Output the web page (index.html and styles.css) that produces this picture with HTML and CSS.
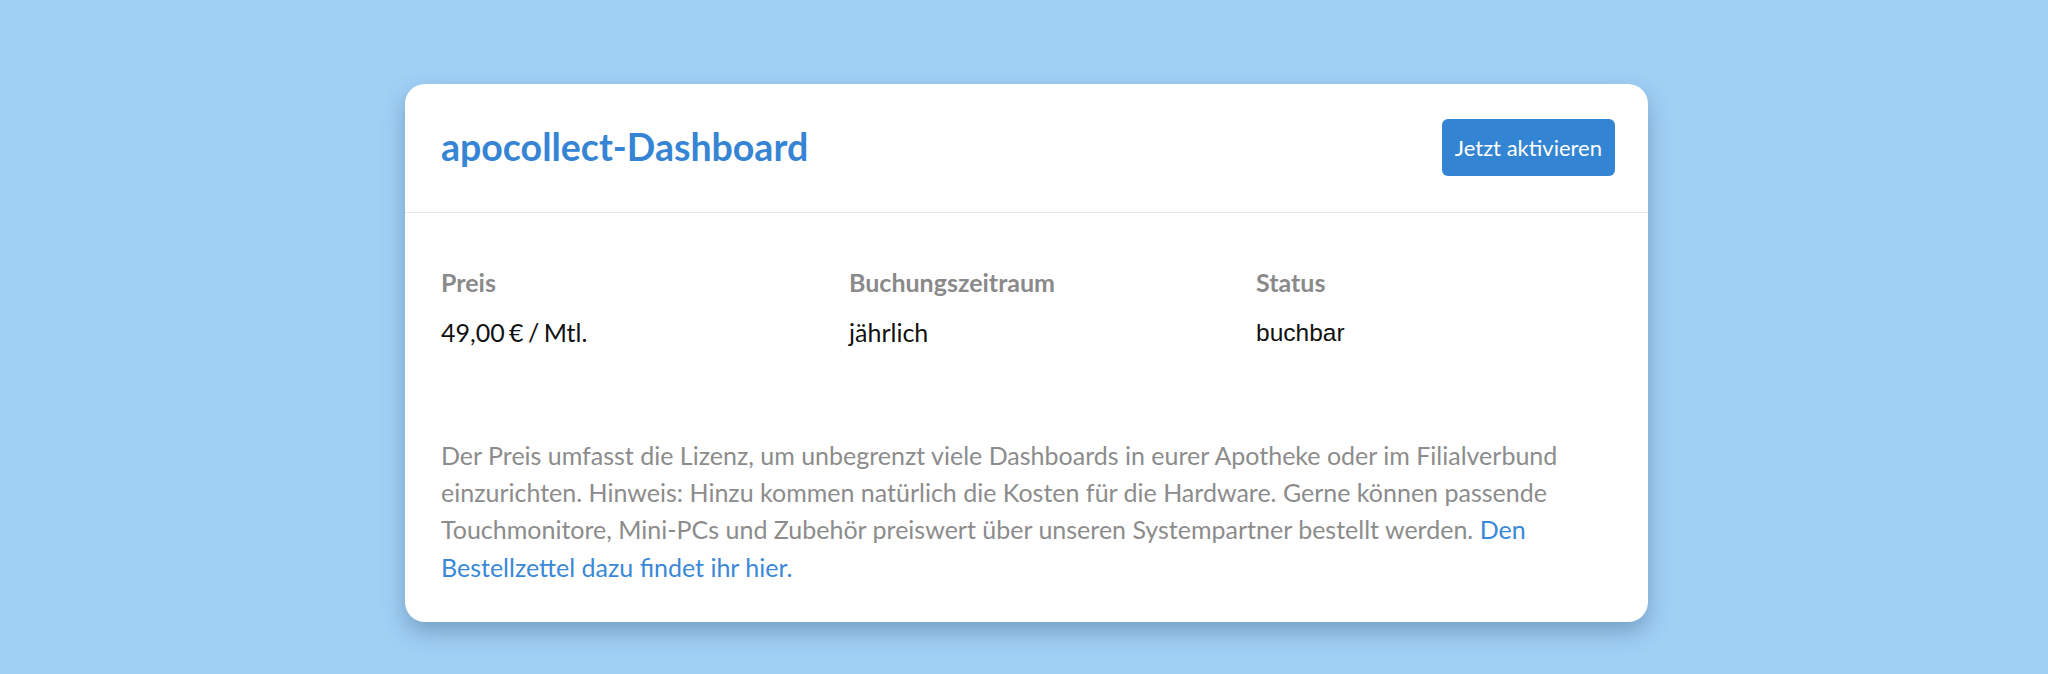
FILE: index.html
```html
<!DOCTYPE html>
<html lang="de">
<head>
<meta charset="utf-8">
<title>apocollect-Dashboard</title>
<link rel="stylesheet" href="styles.css">
</head>
<body>
<div class="card">
  <div class="card-header">
    <h1 class="title">apocollect-Dashboard</h1>
    <button class="btn">Jetzt aktivieren</button>
  </div>
  <div class="card-body">
    <div class="facts">
      <div class="fact">
        <div class="label">Preis</div>
        <div class="value value-price">49,00 € / Mtl.</div>
      </div>
      <div class="fact">
        <div class="label">Buchungszeitraum</div>
        <div class="value">jährlich</div>
      </div>
      <div class="fact">
        <div class="label">Status</div>
        <div class="value value-alt">buchbar</div>
      </div>
    </div>
    <p class="desc">Der Preis umfasst die Lizenz, um unbegrenzt viele Dashboards in eurer Apotheke oder im Filialverbund einzurichten. Hinweis: Hinzu kommen natürlich die Kosten für die Hardware. Gerne können passende Touchmonitore, Mini-PCs und Zubehör preiswert über unseren Systempartner bestellt werden. <a href="#" class="link">Den Bestellzettel dazu findet ihr hier.</a></p>
  </div>
</div>
</body>
</html>
```

FILE: styles.css
```css
html, body {
  margin: 0;
  padding: 0;
}
body {
  background: #a1d0f5;
  font-family: Lato, "Open Sans", sans-serif;
  height: 674px;
  overflow: hidden;
}
.card {
  width: 1243px;
  margin: 84px 0 0 405px;
  background: #ffffff;
  border-radius: 20px;
  box-shadow: 0 10px 22px rgba(40, 70, 110, 0.35);
  overflow: hidden;
}
.card-header {
  height: 128px;
  display: flex;
  align-items: center;
  justify-content: space-between;
  padding: 0 33px 0 36px;
  border-bottom: 1px solid #e6e6ec;
}
.title {
  margin: 0 0 4px 0;
  font-size: 37.5px;
  font-weight: 700;
  color: #3585d4;
  line-height: 1.2;
}
.btn {
  height: 57px;
  margin-top: -1px;
  padding: 0 13px;
  border: none;
  border-radius: 6px;
  background: #3384d3;
  color: #ffffff;
  font-family: Lato, sans-serif;
  font-size: 22px;
  font-weight: 400;
}
.card-body {
  padding: 55px 36px 36px 36px;
}
.facts {
  display: grid;
  grid-template-columns: 408px 407px 1fr;
}
.fact {
  display: flex;
  flex-direction: column;
  gap: 21px;
}
.label {
  font-size: 25px;
  line-height: 29px;
  font-weight: 700;
  color: #8a8a8a;
}
.value {
  font-size: 25px;
  line-height: 29px;
  color: #111111;
}
.value-price {
  word-spacing: -2px;
}
.value-alt {
  font-family: "Liberation Sans", Arial, sans-serif;
  font-size: 24.5px;
}
.desc {
  margin: 90px 0 0 0;
  font-size: 25px;
  line-height: 37.2px;
  color: #8c8c8c;
}
.link {
  color: #3a88d8;
  text-decoration: none;
}
```
